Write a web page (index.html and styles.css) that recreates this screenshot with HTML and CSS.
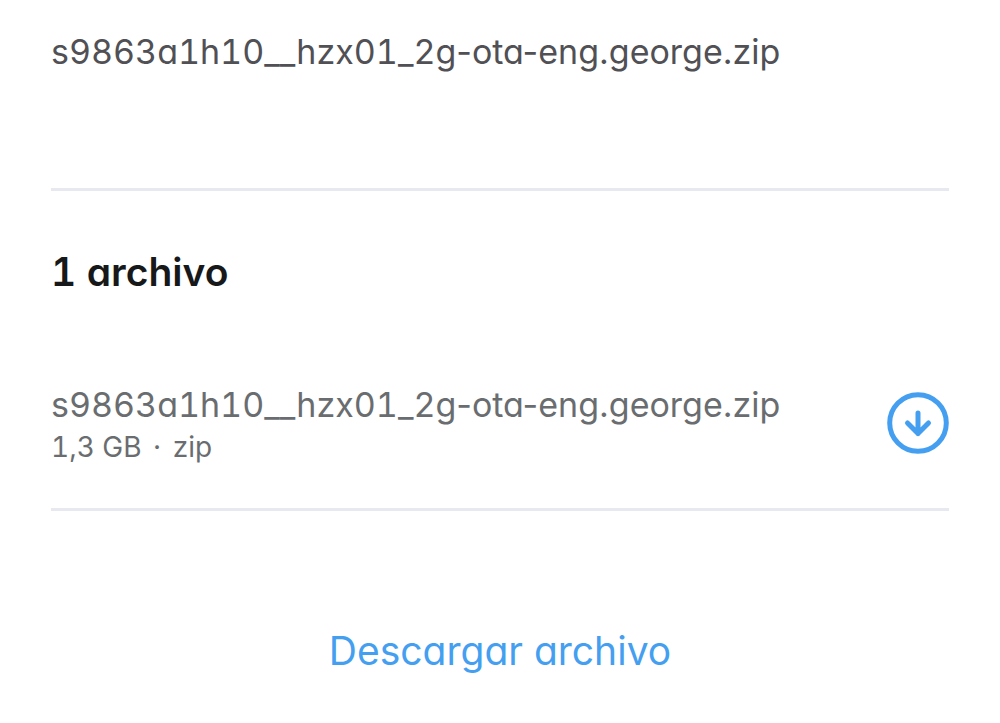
FILE: index.html
```html
<!DOCTYPE html>
<html lang="es">
<head>
    <meta charset="UTF-8">
    <meta name="viewport" content="width=device-width, initial-scale=1.0">
    <title>Descargar archivo</title>
    <link rel="stylesheet" href="styles.css">
</head>
<body>

    <main class="transferencia">
        <header class="titulo">
            <p class="titulo-texto"><span class="cifras">s9863a1h10__hzx01_2g</span>-ota-eng.george.zip</p>
        </header>

        <section class="archivos">
            <h2 class="archivos-total cifras">1 archivo</h2>
            <ul class="archivos-lista">
                <li class="archivo">
                    <div class="archivo-datos">
                        <span class="archivo-nombre"><span class="cifras">s9863a1h10__hzx01_2g</span>-ota-eng.george.zip</span>
                        <span class="archivo-detalle cifras">1,3 GB <span class="punto">·</span> zip</span>
                    </div>
                    <button class="archivo-bajar" type="button" aria-label="Descargar">
                        <svg viewBox="0 0 62 62" width="62" height="62" fill="none" stroke="currentColor">
                            <circle cx="31" cy="31" r="28.3" stroke-width="5"/>
                            <path d="M31 21v20.500M20.500 31l10.500 10.500 10.500-10.500" stroke-width="5" stroke-linecap="round" stroke-linejoin="round"/>
                        </svg>
                    </button>
                </li>
            </ul>
        </section>

        <button class="descargar" type="button">Descargar archivo</button>
    </main>

</body>
</html>
```
FILE: styles.css
```css
:root {
    --color-fondo: #ffffff;
    --color-titulo: #505055;
    --color-encabezado: #17181a;
    --color-texto: #6a6d70;
    --color-linea: #e8e8f0;
    --color-azul: #459ff0;
}

body {
    margin: 0;
    background-color: var(--color-fondo);
    font-family: Inter, sans-serif;
    font-feature-settings: "cv11"; /* "a" de un solo piso */
}

.transferencia {
    display: flex;
    flex-direction: column;
    padding: 0 51px;
}

/* Cifras del mismo ancho */
.cifras {
    font-variant-numeric: tabular-nums;
}

.titulo {
    padding: 28px 0 112px;
    border-bottom: 3px solid var(--color-linea);
}

.titulo-texto {
    margin: 0;
    font-size: 34px;
    line-height: 48px;
    color: var(--color-titulo);
}

.archivos-total {
    margin: 0;
    padding: 57px 0 63px;
    font-size: 39px;
    font-weight: 600;
    line-height: 48px;
    color: var(--color-encabezado);
}

.archivos-lista {
    margin: 0;
    padding: 0;
    list-style: none;
}

.archivo {
    display: flex;
    justify-content: space-between;
    align-items: center;
    padding: 22px 0 43px;
    border-bottom: 3px solid var(--color-linea);
}

.archivo-datos {
    display: flex;
    flex-direction: column;
    color: var(--color-texto);
}

.archivo-nombre {
    font-size: 34px;
    line-height: 48px;
}

.archivo-detalle {
    font-size: 28px;
    line-height: 36px;
}

.punto {
    margin: 0 4px;
}

.archivo-bajar {
    padding: 0;
    border: 0;
    background: none;
    color: var(--color-azul);
    cursor: pointer;
}

.archivo-bajar svg {
    display: block;
}

.descargar {
    align-self: center;
    margin-top: 116px;
    padding: 0;
    border: 0;
    background: none;
    font-family: inherit;
    font-feature-settings: inherit;
    font-size: 39px;
    line-height: 48px;
    color: var(--color-azul);
    cursor: pointer;
}
```
